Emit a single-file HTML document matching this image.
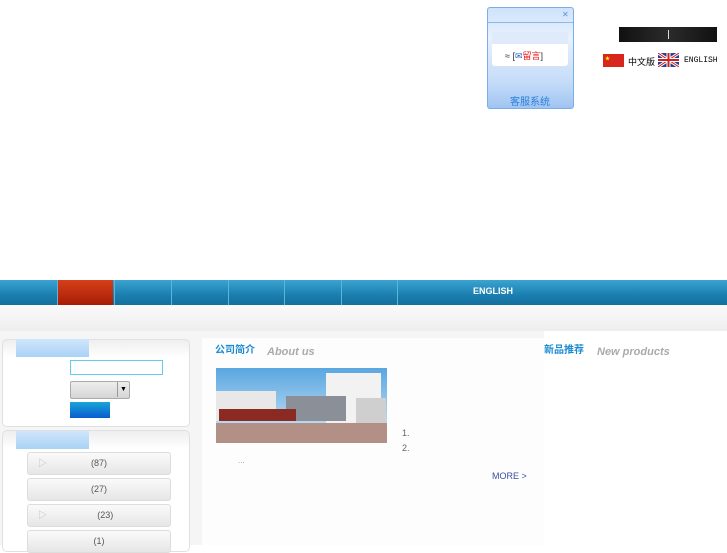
<!DOCTYPE html>
<html><head><meta charset="utf-8"><style>
body{margin:0;width:727px;height:545px;overflow:hidden;background:#fff;font-family:"Liberation Sans","Noto Sans CJK SC",sans-serif;position:relative}
.a{position:absolute}
.nav{top:280px;left:0;width:727px;height:25px;background:linear-gradient(#3aa3d0,#1a7fb0 60%,#146f9c)}
.sep{top:280px;width:1px;height:25px;background:#5cb6dc}
.box{background:#fff;border:1px solid #e0e0e0;border-radius:5px}
.tab{background:linear-gradient(#cfe6fb,#a9d2f5);height:18px;width:73px}
.cat{left:27px;width:142px;height:21px;border:1px solid #ddd;border-radius:3px;background:linear-gradient(#fafafa,#e6e6e6);font-size:9px;color:#555;text-align:center;line-height:21px}
.t{line-height:12px}
</style></head><body>
<div class="a" style="left:487px;top:7px;width:85px;height:100px;border:1px solid #7aaee8;border-radius:3px;background:linear-gradient(#cfe2fb,#e8f1fd 30%,#c4dbf8 75%,#9fc4f2)"></div>
<div class="a" style="left:488px;top:22px;width:85px;height:1px;background:#8db8ea"></div>
<div class="a" style="left:562px;top:10px;font-size:8px;color:#5a8fd8">✕</div>
<div class="a" style="left:492px;top:32px;width:76px;height:34px;background:#fff;border-radius:3px"></div>
<div class="a" style="left:492px;top:32px;width:76px;height:12px;background:#dfeafa"></div>
<div class="a" style="left:505px;top:49px;font-size:9px;color:#333">≈ [<span style="color:#26c">✉</span><span style="color:#e11">留言</span>]</div>
<div class="a" style="left:510px;top:93px;font-size:10px;color:#2a7fd8">客服系统</div>
<div class="a" style="left:619px;top:27px;width:98px;height:15px;background:linear-gradient(90deg,#111,#2b2b2b 50%,#111)"></div>
<div class="a" style="left:668px;top:30px;width:1px;height:9px;background:#ddd"></div>
<div class="a" style="left:603px;top:54px;width:21px;height:13px;background:#d9261c"></div>
<div class="a" style="left:605px;top:55px;font-size:5px;color:#ff0">★</div>
<div class="a" style="left:628px;top:55px;font-size:9px;color:#000">中文版</div>
<svg class="a" style="left:658px;top:53px" width="21" height="14"><rect width="21" height="14" fill="#2a3f8f"/><path d="M0 0L21 14M21 0L0 14" stroke="#fff" stroke-width="3"/><path d="M0 0L21 14M21 0L0 14" stroke="#c22" stroke-width="1"/><path d="M10.5 0V14M0 7H21" stroke="#fff" stroke-width="4"/><path d="M10.5 0V14M0 7H21" stroke="#c22" stroke-width="2"/></svg>
<div class="a" style="left:684px;top:56px;font-size:8px;font-family:'Liberation Mono',monospace;color:#000">ENGLISH</div>
<div class="a nav"></div>
<div class="a" style="left:58px;top:280px;width:55px;height:25px;background:linear-gradient(#d6401a,#a51d05)"></div>
<div class="a sep" style="left:57px"></div><div class="a sep" style="left:114px"></div><div class="a sep" style="left:171px"></div><div class="a sep" style="left:228px"></div><div class="a sep" style="left:284px"></div><div class="a sep" style="left:341px"></div><div class="a sep" style="left:397px"></div>
<div class="a" style="left:473px;top:286px;font-size:9px;font-weight:bold;color:#fff">ENGLISH</div>
<div class="a" style="left:0;top:305px;width:727px;height:26px;background:linear-gradient(#fafafa,#eee)"></div>
<div class="a" style="left:0;top:331px;width:544px;height:214px;background:#f5f5f5"></div>
<div class="a" style="left:202px;top:338px;width:342px;height:207px;background:#fdfdfd"></div>
<div class="a box" style="left:2px;top:339px;width:186px;height:86px;background:linear-gradient(#eee,#fff 20%)"></div>
<div class="a tab" style="left:16px;top:339px"></div>
<div class="a" style="left:70px;top:360px;width:91px;height:13px;border:1px solid #5ccfee;background:#fff"></div>
<div class="a" style="left:70px;top:381px;width:58px;height:16px;border:1px solid #aaa;border-radius:2px;background:linear-gradient(#eee,#d5d5d5)"></div>
<div class="a" style="left:117px;top:382px;width:11px;height:15px;border-left:1px solid #999;font-size:7px;text-align:center;line-height:15px">▼</div>
<div class="a" style="left:70px;top:402px;width:40px;height:16px;background:linear-gradient(#19a5d8,#0a5bd0)"></div>
<div class="a box" style="left:2px;top:430px;width:186px;height:120px;background:linear-gradient(#eee,#fff 15%)"></div>
<div class="a tab" style="left:16px;top:431px"></div>
<div class="a cat" style="top:452px">(87)<span style="position:absolute;left:10px;color:#bbb">▷</span></div>
<div class="a cat" style="top:478px">(27)</div>
<div class="a cat" style="top:504px">&nbsp;&nbsp;&nbsp;&nbsp;&nbsp;(23)<span style="position:absolute;left:10px;color:#bbb">▷</span></div>
<div class="a cat" style="top:530px">(1)</div>
<div class="a t" style="left:215px;top:345px;font-size:10px;font-weight:bold;color:#1a8ad0">公司简介</div>
<div class="a t" style="left:267px;top:346px;font-size:11px;font-style:italic;font-weight:bold;color:#aaa">About us</div>
<svg class="a" style="left:216px;top:368px" width="171" height="75"><defs><linearGradient id="s" x1="0" y1="0" x2="0" y2="1"><stop offset="0" stop-color="#5aa6e0"/><stop offset="1" stop-color="#d8ecf8"/></linearGradient></defs><rect width="171" height="75" fill="url(#s)"/><rect x="0" y="23" width="60" height="30" fill="#e8e8e8"/><rect x="110" y="5" width="55" height="50" fill="#f2f2f2"/><rect x="70" y="28" width="60" height="25" fill="#8a8f98"/><rect x="3" y="41" width="77" height="12" fill="#8a2a22"/><rect x="140" y="30" width="30" height="27" fill="#cfcfcf"/><rect x="0" y="55" width="171" height="20" fill="#b39086"/></svg>
<div class="a" style="left:402px;top:428px;font-size:9px;color:#666">1.</div>
<div class="a" style="left:402px;top:443px;font-size:9px;color:#666">2.</div>
<div class="a" style="left:238px;top:456px;font-size:8px;color:#999">...</div>
<div class="a" style="left:492px;top:471px;font-size:9px;color:#3a4fa0">MORE &gt;</div>
<div class="a t" style="left:544px;top:345px;font-size:10px;font-weight:bold;color:#1a8ad0">新品推荐</div>
<div class="a t" style="left:597px;top:346px;font-size:11px;font-style:italic;font-weight:bold;color:#aaa">New products</div>
</body></html>
